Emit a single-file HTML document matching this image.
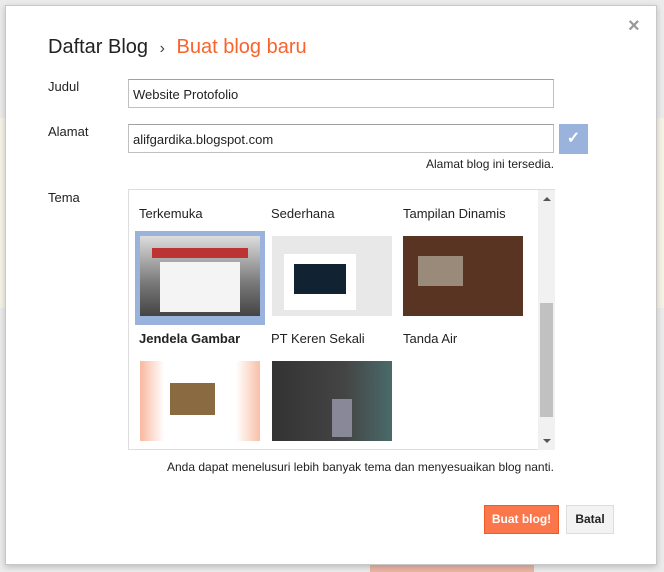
<!DOCTYPE html>
<html><head><style>
body{margin:0;width:664px;height:572px;background:#ebebeb;font-family:"Liberation Sans",Arial,sans-serif;position:relative;overflow:hidden}
.abs{position:absolute}
.dlg{left:5px;top:5px;width:650px;height:558px;background:#fff;border:1px solid #c8c8c8;box-shadow:0 2px 6px rgba(0,0,0,.2)}
.lbl{font-size:13px;color:#222}
.inp{border:1px solid #c0c0c0;border-top-color:#a0a0a0;background:#fff;font-size:13px;color:#222;box-sizing:border-box;padding:7px 4px}
.tn{font-size:13px;color:#222}
.th{width:120px;height:80px}
</style></head><body>
<div class="abs" style="left:0;top:118px;width:664px;height:190px;background:#f5f2e6"></div>
<div class="abs" style="left:370px;top:562px;width:164px;height:10px;background:#eab5a5"></div>
<div class="abs dlg"></div>
<div class="abs" style="left:628px;top:15px;font-size:20px;color:#999;font-weight:bold">×</div>
<div class="abs" style="left:48px;top:36px;font-size:20px;color:#222">Daftar Blog <span style="font-size:16px;color:#444;margin:0 6px">›</span> <span style="color:#f8632c">Buat blog baru</span></div>
<div class="abs lbl" style="left:48px;top:79px">Judul</div>
<div class="abs inp" style="left:128px;top:79px;width:426px;height:29px">Website Protofolio</div>
<div class="abs lbl" style="left:48px;top:124px">Alamat</div>
<div class="abs inp" style="left:128px;top:124px;width:426px;height:29px">alifgardika.blogspot.com</div>
<div class="abs" style="left:559px;top:124px;width:29px;height:30px;background:#9ab3dd;color:#fff;font-size:16px;text-align:center;line-height:30px;font-weight:bold">✓</div>
<div class="abs lbl" style="left:426px;top:157px;font-size:12px">Alamat blog ini tersedia.</div>
<div class="abs lbl" style="left:48px;top:190px">Tema</div>
<div class="abs" style="left:128px;top:189px;width:427px;height:261px;border:1px solid #ddd;box-sizing:border-box"></div>
<div class="abs" style="left:538px;top:190px;width:17px;height:260px;background:#f1f1f1"></div>
<div class="abs" style="left:540px;top:303px;width:13px;height:114px;background:#c1c1c1"></div>
<div class="abs" style="left:543px;top:197px;width:0;height:0;border:4px solid transparent;border-bottom:4px solid #555;border-top:0"></div>
<div class="abs" style="left:543px;top:439px;width:0;height:0;border:4px solid transparent;border-top:4px solid #555;border-bottom:0"></div>
<div class="abs tn" style="left:139px;top:206px">Terkemuka</div>
<div class="abs tn" style="left:271px;top:206px">Sederhana</div>
<div class="abs tn" style="left:403px;top:206px">Tampilan Dinamis</div>
<div class="abs" style="left:135px;top:231px;width:130px;height:94px;background:#9ab3dd"></div>
<div class="abs th" style="left:140px;top:236px;background:linear-gradient(#ddd,#777 60%,#444);"><div style="margin:12px 12px 0;height:10px;background:#b33"></div><div style="margin:4px 20px 0;height:50px;background:#f4f4f4"></div></div>
<div class="abs th" style="left:272px;top:236px;background:#e8e8e8"><div style="margin:18px 10px 0 12px;width:72px;height:56px;background:#fff"><div style="margin:0 10px;position:relative;top:10px;height:30px;background:#123"></div></div></div>
<div class="abs th" style="left:403px;top:236px;background:#5a3422"><div style="margin:20px 0 0 15px;width:45px;height:30px;background:#9a8a7a;display:inline-block"></div></div>
<div class="abs tn" style="left:139px;top:331px;font-weight:bold">Jendela Gambar</div>
<div class="abs tn" style="left:271px;top:331px">PT Keren Sekali</div>
<div class="abs tn" style="left:403px;top:331px">Tanda Air</div>
<div class="abs th" style="left:140px;top:361px;background:linear-gradient(90deg,#f9b8a0,#fff 20%,#fff 80%,#f9c0a8)"><div style="margin:22px 0 0 30px;width:45px;height:32px;background:#8a6a40"></div></div>
<div class="abs th" style="left:272px;top:361px;background:linear-gradient(90deg,#333,#444 60%,#4a6a6a)"><div style="margin:38px 0 0 60px;width:20px;height:38px;background:#889"></div></div>
<div class="abs lbl" style="left:167px;top:460px;font-size:12px">Anda dapat menelusuri lebih banyak tema dan menyesuaikan blog nanti.</div>
<div class="abs" style="left:484px;top:505px;width:75px;height:29px;background:#fc764b;border:1px solid #f05a24;box-sizing:border-box;color:#fff;font-weight:bold;font-size:12px;text-align:center;line-height:27px">Buat blog!</div>
<div class="abs" style="left:566px;top:505px;width:48px;height:29px;background:#f3f3f3;border:1px solid #ddd;box-sizing:border-box;color:#222;font-weight:bold;font-size:12px;text-align:center;line-height:27px">Batal</div>
</body></html>
